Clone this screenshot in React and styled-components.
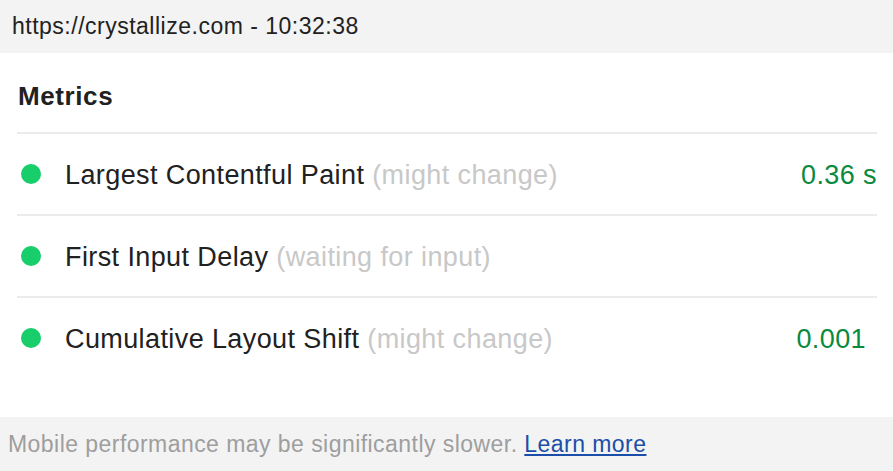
import React from "react";
import styled, { createGlobalStyle } from "styled-components";

const GlobalStyle = createGlobalStyle`
  html, body {
    margin: 0;
    padding: 0;
    background: #ffffff;
    font-family: "Liberation Sans", Arial, sans-serif;
  }
`;

const metrics = [
  { name: "Largest Contentful Paint", note: "(might change)", value: "0.36 s", inset: 0 },
  { name: "First Input Delay", note: "(waiting for input)", value: "", inset: 0 },
  { name: "Cumulative Layout Shift", note: "(might change)", value: "0.001", inset: 11 },
];

const App = () => {
  return (
    <Page>
      <GlobalStyle />
      <Header>https://crystallize.com - 10:32:38</Header>
      <Body>
        <Title>Metrics</Title>
        <List>
          {metrics.map((m) => (
            <Row key={m.name}>
              <Dot />
              <Name>
                {m.name} <Note>{m.note}</Note>
              </Name>
              <Value $inset={m.inset}>{m.value}</Value>
            </Row>
          ))}
        </List>
      </Body>
      <Footer>
        Mobile performance may be significantly slower.{" "}
        <Link href="#">Learn more</Link>
      </Footer>
    </Page>
  );
};

export default App;

const Page = styled.div`
  width: 893px;
  height: 471px;
  display: flex;
  flex-direction: column;
  background: #ffffff;
  overflow: hidden;
`;

const Header = styled.div`
  height: 53px;
  flex-shrink: 0;
  display: flex;
  align-items: center;
  padding-left: 12px;
  background: #f3f3f3;
  color: #212121;
  font-size: 23px;
  letter-spacing: 0.5px;
`;

const Body = styled.div`
  flex: 1;
  padding: 0 16px 0 17px;
`;

const Title = styled.div`
  height: 81px;
  display: flex;
  align-items: center;
  padding-left: 1px;
  padding-top: 8px;
  box-sizing: border-box;
  font-size: 26px;
  font-weight: bold;
  letter-spacing: 0.6px;
  color: #212121;
  border-bottom: 2px solid #ebebeb;
`;

const List = styled.div`
  display: flex;
  flex-direction: column;
`;

const Row = styled.div`
  height: 82px;
  display: flex;
  align-items: center;
  border-bottom: 2px solid #ebebeb;
  box-sizing: border-box;

  &:last-child {
    border-bottom-color: transparent;
  }
`;

const Dot = styled.span`
  width: 20px;
  height: 20px;
  border-radius: 50%;
  background: #18ce6a;
  margin-left: 4px;
  margin-right: 24px;
  flex-shrink: 0;
`;

const Name = styled.div`
  flex: 1;
  padding-top: 2px;
  font-size: 27px;
  letter-spacing: 0.4px;
  color: #212121;
`;

const Note = styled.span`
  color: #c8c8c8;
`;

const Value = styled.div`
  padding-top: 2px;
  padding-right: ${(p) => p.$inset}px;
  font-size: 27px;
  letter-spacing: 0.4px;
  color: #0a8a3e;
`;

const Footer = styled.div`
  height: 54px;
  flex-shrink: 0;
  display: flex;
  align-items: center;
  white-space: pre;
  padding-left: 8px;
  background: #f3f3f3;
  color: #9e9e9e;
  font-size: 23px;
  letter-spacing: 0.45px;
`;

const Link = styled.a`
  color: #1a4ea8;
  text-decoration: underline;
`;
